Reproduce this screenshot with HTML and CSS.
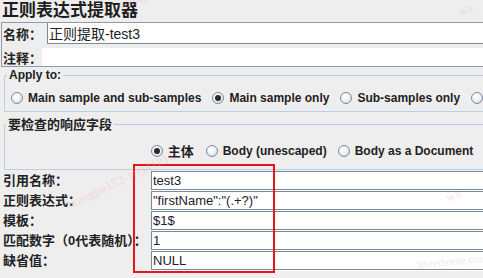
FILE: index.html
```html
<!DOCTYPE html>
<html lang="zh-CN">
<head>
<meta charset="utf-8">
<title>正则表达式提取器</title>
<link rel="stylesheet" href="styles.css">
</head>
<body>
<div class="page">
  <h1 class="title">正则表达式提取器</h1>
  <div class="namebox">
    <div class="row row-name">
      <span class="lbl">名称：</span>
      <div class="input name-input">正则提取-test3</div>
    </div>
    <div class="row row-note">
      <span class="lbl">注释：</span>
      <div class="input note-input"></div>
    </div>
  </div>

  <fieldset class="group apply">
    <legend>Apply to:</legend>
    <div class="radios">
      <label class="radio"><span class="circle"></span>Main sample and sub-samples</label>
      <label class="radio on"><span class="circle"></span>Main sample only</label>
      <label class="radio"><span class="circle"></span>Sub-samples only</label>
      <label class="radio"><span class="circle"></span>JMeter Variable Name to use</label>
    </div>
  </fieldset>

  <fieldset class="group check">
    <legend>要检查的响应字段</legend>
    <div class="radios center">
      <label class="radio on cjk"><span class="circle"></span>主体</label>
      <label class="radio"><span class="circle"></span>Body (unescaped)</label>
      <label class="radio"><span class="circle"></span>Body as a Document</label>
    </div>
  </fieldset>

  <div class="form">
    <span class="flbl">引用名称：</span><div class="field">test3</div>
    <span class="flbl">正则表达式：</span><div class="field">"firstName":"(.+?)"</div>
    <span class="flbl">模板：</span><div class="field">$1$</div>
    <span class="flbl">匹配数字（0代表随机）：</span><div class="field">1</div>
    <span class="flbl">缺省值：</span><div class="field">NULL</div>
  </div>
</div>

<div class="annot"></div>
<span class="wm wm1">wangjie152</span>
<span class="wm wm2">wa</span>
<span class="wm wm3">wangjie152-18941811</span>
<span class="wm wm4">wa</span>
<span class="wm wm5">testerhome.com</span>
</body>
</html>
```

FILE: styles.css
```css
html, body {
  margin: 0;
  padding: 0;
  overflow: hidden;
  background: #eeeeee;
}

body {
  width: 483px;
  height: 278px;
  position: relative;
  font-family: "Liberation Sans", "Noto Sans CJK SC", sans-serif;
  color: #222222;
}

.page {
  width: 620px;
}

.title {
  margin: 0;
  padding-left: 2px;
  height: 22px;
  font-size: 17px;
  line-height: 21px;
  font-weight: bold;
  color: #1e1e1e;
}

.namebox {
  margin-left: 1px;
  border: 1px solid #8f9ba6;
  border-right: none;
}

.row {
  display: flex;
}

.row-name {
  height: 21px;
}

.row-note {
  height: 18px;
  margin-top: 4px;
}

.lbl {
  display: flex;
  align-items: center;
  padding-left: 1px;
  font-size: 13px;
  font-weight: bold;
  white-space: nowrap;
}

.row-name .lbl {
  width: 44px;
}

.row-note .lbl {
  width: 39px;
}

.input {
  flex: 1;
  background: #ffffff;
  font-size: 14px;
  box-sizing: border-box;
}

.name-input {
  display: flex;
  align-items: center;
  padding-left: 1px;
  border-left: 1px solid #7a8a99;
  border-bottom: 1px solid #7a8a99;
}

.group {
  margin: 1px 0 0 4px;
  padding: 6px 0 5px 6px;
  border: 1px solid #b8cfe5;
  min-width: 0;
}

.group legend {
  margin-left: -4px;
  padding: 0 2px;
  font-size: 12px;
  line-height: 15px;
  font-weight: bold;
}

.check {
  margin-top: 5px;
  padding: 10px 0 10px 0;
}

.check legend {
  margin-left: 1px;
  font-size: 13px;
}

.radios {
  display: flex;
  align-items: center;
  gap: 11px;
  height: 17px;
}

.radios.center {
  justify-content: center;
}

.radio {
  display: flex;
  align-items: center;
  gap: 5px;
  font-size: 12px;
  font-weight: bold;
  white-space: nowrap;
}

.radio.cjk {
  font-size: 13px;
  margin-right: 1px;
}

.circle {
  flex: none;
  display: flex;
  align-items: center;
  justify-content: center;
  width: 12px;
  height: 12px;
  box-sizing: border-box;
  border-radius: 50%;
  border: 1px solid #7d8c9b;
  background: radial-gradient(circle at 40% 35%, #ffffff 0, #f4f7fa 35%, #c3d2e1 100%);
}

.on .circle::after {
  content: "";
  width: 6px;
  height: 6px;
  border-radius: 50%;
  background: #2a2a2a;
}

.form {
  display: grid;
  grid-template-columns: 151px 1fr;
  row-gap: 1px;
  margin-top: 1px;
}

.flbl {
  padding-left: 3px;
  font-size: 13px;
  line-height: 19px;
  font-weight: bold;
  white-space: nowrap;
}

.field {
  height: 19px;
  box-sizing: border-box;
  padding-left: 1px;
  border: 1px solid #7a8a99;
  border-right: none;
  box-shadow: 0 1px 0 #ffffff;
  background: #ffffff;
  font-size: 13px;
  line-height: 17px;
  color: #1c1c2a;
}

.annot {
  position: absolute;
  left: 133px;
  top: 164px;
  width: 142px;
  height: 109px;
  box-sizing: border-box;
  border: 2px solid #e8141c;
}

.wm {
  position: absolute;
  font-family: "Liberation Serif", serif;
  font-size: 13px;
  color: #f2a5a5;
  opacity: 0.3;
  white-space: nowrap;
  transform-origin: left bottom;
  transform: rotate(-25deg);
}

.wm1 { left: 122px; top: -2px; }
.wm2 { left: 462px; top: 4px; }
.wm3 { left: 72px; top: 196px; }
.wm4 { left: 450px; top: 190px; }
.wm5 {
  left: 418px;
  top: 258px;
  font-size: 11px;
  color: #b9b9b9;
  transform: rotate(-5deg);
}
```
